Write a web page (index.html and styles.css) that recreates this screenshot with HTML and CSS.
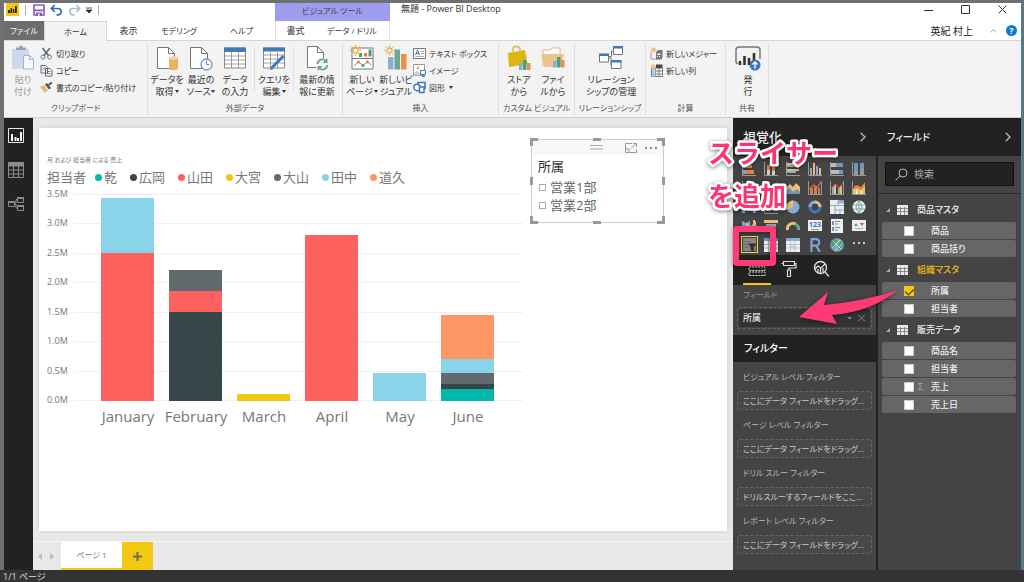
FILE: index.html
```html
<!DOCTYPE html>
<html lang="ja">
<head>
    <meta charset="UTF-8">
    <meta name="viewport" content="width=device-width, initial-scale=1.0">
    <title>無題 - Power BI Desktop</title>
    <link rel="stylesheet" href="styles.css">
</head>
<body>
    <div class="window">
        <!-- タイトルバー -->
        <header class="titlebar">
            <div class="quick-access">
                <svg class="app-logo" width="13" height="13" viewBox="0 0 13 13"><rect width="13" height="13" fill="#f2c811"/><path d="M2 10V7h2v3zM4.500 10V5h1.500v5zM6.800 10V6h1.500v4zM9 10V3h1.800v7z" fill="#222"/></svg>
                <span class="bar"></span>
                <button class="icon-btn save" aria-label="保存"><svg width="12" height="12" viewBox="0 0 12 12"><path d="M1 1h10v10H1z" fill="#fff" stroke="#8a5ab5" stroke-width="1.600"/><path d="M1 5.500h10v1.800H1zM3 8.500h6V12H3z" fill="#8a5ab5"/><path d="M5 9.500h1.500V12H5z" fill="#fff"/></svg></button>
                <button class="icon-btn" aria-label="元に戻す"><svg width="13" height="12" viewBox="0 0 13 12"><path d="M1.500 4.500H8a3.200 3.200 0 0 1 0 6.400H6.500M4.800 1L1.300 4.500 4.800 8" fill="none" stroke="#2f6eb3" stroke-width="1.700"/></svg></button>
                <button class="icon-btn" aria-label="やり直し"><svg width="13" height="12" viewBox="0 0 13 12"><path d="M11.500 4.500H5a3.200 3.200 0 0 0 0 6.400h1.500M8.200 1l3.500 3.500L8.200 8" fill="none" stroke="#a9bdd3" stroke-width="1.700"/></svg></button>
                <button class="icon-btn" aria-label="カスタマイズ"><svg width="6" height="8" viewBox="0 0 6 8"><path d="M0 2h6M0 4h6L3 7z" stroke="#333" stroke-width=".8" fill="#333"/></svg></button>
                <span class="bar"></span>
            </div>
            <div class="context-title">ビジュアル ツール</div>
            <h1 class="doc-title">無題 - Power BI Desktop</h1>
            <div class="window-buttons">
                <button aria-label="最小化"><svg width="9" height="9" viewBox="0 0 9 9"><path d="M0 5.500h9" stroke="#333"/></svg></button>
                <button aria-label="最大化"><svg width="9" height="9" viewBox="0 0 9 9"><path d="M.5.5h8v8h-8z" fill="none" stroke="#333"/></svg></button>
                <button aria-label="閉じる"><svg width="9" height="9" viewBox="0 0 9 9"><path d="M.5.5l8 8M8.500.5l-8 8" stroke="#333"/></svg></button>
            </div>
        </header>

        <!-- リボンタブ -->
        <nav class="tabs">
            <button class="tab tab-file">ファイル</button>
            <button class="tab tab-home">ホーム</button>
            <button class="tab tab-view">表示</button>
            <button class="tab tab-model">モデリング</button>
            <button class="tab tab-help">ヘルプ</button>
            <div class="context-tabs">
                <button class="tab tab-format">書式</button>
                <button class="tab tab-drill">データ / ドリル</button>
            </div>
            <div class="account">
                <span>英紀 村上</span>
                <svg width="7" height="4" viewBox="0 0 7 4"><path d="M.5 3.500l3-3 3 3" fill="none" stroke="#aaa"/></svg>
                <button class="help" aria-label="ヘルプを開く">?</button>
            </div>
        </nav>

        <!-- リボン -->
        <section class="ribbon">
            <div class="group group-clip">
                <div class="tools">
                    <button class="big disabled">
                        <svg width="24" height="26" viewBox="0 0 24 26"><path d="M1 4h17v20H1z" fill="#cdd9ea"/><path d="M5 5V2.500h3a2 2 0 0 1 4 0h3V5z" fill="#8da3c2"/><path d="M12.500 10.500h6l4 4v9.500h-10z" fill="#f5f8fc" stroke="#9cb2d4"/><path d="M18.500 10.500v4h4" fill="none" stroke="#9cb2d4"/></svg>
                        <span>貼り<br>付け</span>
                    </button>
                    <div class="small-list">
                        <button class="small"><svg width="13" height="13" viewBox="0 0 13 13"><path d="M2.500 1l6.500 8M10 1L3.500 9" stroke="#666" stroke-width="1.500"/><circle cx="3" cy="10" r="2" fill="none" stroke="#5683b5"/><circle cx="9.500" cy="10" r="2" fill="none" stroke="#5683b5"/></svg>切り取り</button>
                        <button class="small"><svg width="13" height="13" viewBox="0 0 13 13"><path d="M1 1.500h4.500l2 2V9H1zM5.500 4.500H10l2 2V12H5.500z" fill="#fff" stroke="#666"/><path d="M2.500 4h3M2.500 6h2M7 7.500h3.500M7 9.500h3.500" stroke="#5683b5"/></svg>コピー</button>
                        <button class="small"><svg width="13" height="13" viewBox="0 0 13 13"><path d="M0 6l4-2 4 5-3 3z" fill="#e6b877"/><path d="M5 3.500l2-1.500 4 5-2 1.500z" fill="#555"/><path d="M8.500 4L12 1.500" stroke="#555" stroke-width="2"/></svg>書式のコピー/貼り付け</button>
                    </div>
                </div>
                <div class="group-name">クリップボード</div>
            </div>
            <div class="group group-data">
                <div class="tools">
                    <button class="big">
                        <svg width="24" height="26" viewBox="0 0 24 26"><path d="M2.500 2.500h11l6 6v15h-17z" fill="#fff" stroke="#777"/><path d="M13.500 2.500v6h6" fill="none" stroke="#777"/><path d="M14 13v10c0 3 9 3 9 0V13z" fill="#e6b45c"/><ellipse cx="18.500" cy="13" rx="4.500" ry="1.800" fill="#f3d59c"/></svg>
                        <span>データを<br>取得<i class="caret"></i></span>
                    </button>
                    <button class="big">
                        <svg width="24" height="26" viewBox="0 0 24 26"><path d="M1.500 2.500h11l6 6v15h-17z" fill="#fff" stroke="#777"/><path d="M12.500 2.500v6h6" fill="none" stroke="#777"/><circle cx="17.500" cy="19.500" r="5.500" fill="#fff" stroke="#6e93bd" stroke-width="1.300"/><path d="M17.500 15.500v4h3" fill="none" stroke="#6e93bd"/></svg>
                        <span>最近の<br>ソース<i class="caret"></i></span>
                    </button>
                    <button class="big">
                        <svg width="24" height="26" viewBox="0 0 24 26"><path d="M1.500 3h21v20h-21z" fill="#fff" stroke="#888"/><path d="M1 2.500h22v4.500H1z" fill="#4079b5"/><path d="M1 11h22M1 15h22M1 19h22M8.500 7v16M15.500 7v16" stroke="#888" stroke-width=".8"/></svg>
                        <span>データ<br>の入力</span>
                    </button>
                    <span class="divider"></span>
                    <button class="big">
                        <svg width="24" height="26" viewBox="0 0 24 26"><path d="M1.500 3h21v20h-21z" fill="#fff" stroke="#888"/><path d="M1 2.500h22v4H1z" fill="#4079b5"/><path d="M1 10h22M1 14h22M1 18h22M8.500 7v16M15.500 7v16" stroke="#888" stroke-width=".8"/><path d="M10 22.500L21.500 11" stroke="#3b78bb" stroke-width="3"/><path d="M8 25l1-3.500 2.500 2.500z" fill="#3b78bb"/></svg>
                        <span>クエリを<br>編集<i class="caret"></i></span>
                    </button>
                    <span class="divider"></span>
                    <button class="big wide">
                        <svg width="24" height="26" viewBox="0 0 24 26"><path d="M2.500 1.500h10l6 6v15h-16z" fill="#fff" stroke="#777"/><path d="M12.500 1.500v6h6" fill="none" stroke="#777"/><path d="M11 13h12v12H11z" fill="#f3f3f3"/><path d="M12.500 19a5 5 0 0 1 9-2.500M22.500 20a5 5 0 0 1-9 2.500" fill="none" stroke="#6fa888" stroke-width="1.800"/><path d="M22.500 13v5h-5zM12.500 26v-5h5z" fill="#6fa888"/></svg>
                        <span>最新の情<br>報に更新</span>
                    </button>
                </div>
                <div class="group-name">外部データ</div>
            </div>
            <div class="group group-insert">
                <div class="tools">
                    <button class="big">
                        <svg width="24" height="26" viewBox="0 0 24 26"><path d="M2 3h21v21H2zM2 13.500h21" fill="#fff" stroke="#777"/><path d="M9 8h3v4H9z" fill="#4f9d80"/><path d="M14 8h3v3.500h-3z" fill="#e5823a"/><path d="M18.500 4.500h3v7h-3z" fill="#4f9d80"/><path d="M4 21l4.500-4 4.500 3.500 4.500-4L21 20" fill="none" stroke="#4f9d80"/><circle cx="8.500" cy="17" r="1.600" fill="#e5823a"/><circle cx="13" cy="20.500" r="1.600" fill="#4f9d80"/><circle cx="17.500" cy="17" r="1.600" fill="#e5823a"/><circle cx="5.500" cy="5.500" r="2.500" fill="#fff" stroke="#e6b45c" stroke-width="1.500"/><path d="M5.500 0v2M5.500 9v2M0 5.500h2M9 5.500h2M1.500 1.500l1.500 1.500M8 8l1.500 1.500M9.500 1.500L8 3M3 8L1.500 9.500" stroke="#e6b45c" stroke-width="1.300"/></svg>
                        <span>新しい<br>ページ<i class="caret"></i></span>
                    </button>
                    <button class="big">
                        <svg width="24" height="26" viewBox="0 0 24 26"><path d="M4 12h5.500v12.500H4z" fill="#8badd3"/><path d="M10.500 4.500H16v20h-5.500z" fill="#6fa593"/><path d="M17 9h5.500v15.500H17z" fill="#ed8d46"/><circle cx="5.500" cy="5.500" r="2.500" fill="none" stroke="#e6b45c" stroke-width="1.300"/><path d="M5.500 0v2M5.500 9v2M0 5.500h2M9 5.500h2M1.500 1.500l1.500 1.500M8 8l1.500 1.500M9.500 1.500L8 3M3 8L1.500 9.500" stroke="#e6b45c"/></svg>
                        <span>新しいビ<br>ジュアル</span>
                    </button>
                    <div class="small-list">
                        <button class="small"><svg width="13" height="13" viewBox="0 0 13 13"><path d="M.5 1.500h12v10H.5z" fill="#fff" stroke="#777"/><path d="M2.500 8l2-5 2 5M3 6.500h3" fill="none" stroke="#3b78bb"/><path d="M8 4.500h3M8 6.500h3M2.500 9.500h8.500" stroke="#999" stroke-width=".8"/></svg>テキスト ボックス</button>
                        <button class="small"><svg width="13" height="13" viewBox="0 0 13 13"><path d="M.5.5h11v11H.5z" fill="#fff" stroke="#999"/><circle cx="5" cy="4" r="1.500" fill="#e6b45c"/><path d="M1 9.500l3-3 3 3v2H1z" fill="#bcd0e6"/><path d="M7.500 6.500h5v4h-5zM9 12.500h3" fill="#fff" stroke="#3b78bb"/></svg>イメージ</button>
                        <button class="small"><svg width="13" height="13" viewBox="0 0 13 13"><path d="M5 1.500h7v6H5z" fill="#fff" stroke="#3b78bb" stroke-width="1.600"/><circle cx="4" cy="6.500" r="3.200" fill="#fff" stroke="#3b78bb" stroke-width="1.400"/><path d="M6.500 6h4.500v5.500H6.500z" fill="#fff" stroke="#3b78bb" stroke-width="1.400"/></svg>図形<i class="caret"></i></button>
                    </div>
                </div>
                <div class="group-name">挿入</div>
            </div>
            <div class="group group-custom">
                <div class="tools">
                    <button class="big">
                        <svg width="24" height="26" viewBox="0 0 24 26"><path d="M6 7V4c0-3 6-4 7 0v3" fill="none" stroke="#dcc05c" stroke-width="1.600"/><path d="M1 8l17-3 2.500 14L2 22z" fill="#dcb70f"/><path d="M12 18h3.500v7H12z" fill="#8badd3"/><path d="M16 15h3.500v10H16z" fill="#4f9d80"/><path d="M20 18h3.500v7H20z" fill="#ed8d46"/></svg>
                        <span>ストア<br>から</span>
                    </button>
                    <button class="big">
                        <svg width="24" height="26" viewBox="0 0 24 26"><path d="M2 21V5h7l2-2h8v6" fill="#fff" stroke="#e6b877"/><path d="M0 9h23l-3.500 13H3z" fill="#ebc48b"/><path d="M12 16h3.500v6.500H12z" fill="#8badd3"/><path d="M16 12h3.500v10.500H16z" fill="#4f9d80"/><path d="M20 15h3.500v7.500H20z" fill="#ed8d46"/></svg>
                        <span>ファイ<br>ルから</span>
                    </button>
                </div>
                <div class="group-name">カスタム ビジュアル</div>
            </div>
            <div class="group group-rel">
                <div class="tools">
                    <button class="big full">
                        <svg width="24" height="26" viewBox="0 0 24 26"><path d="M10 11.500h2.500V6H15M10 13h2v7h1" fill="none" stroke="#777"/><path d="M14.500 2h9v7.500h-9zM.5 9.500h9V17h-9zM12.500 16h9.500v7.500h-9.500z" fill="#fff" stroke="#777"/><path d="M14 1h10v2.500H14zM0 8.500h10V11H0zM12 15h10.500v2.500H12z" fill="#4079b5"/></svg>
                        <span>リレーション<br>シップの管理</span>
                    </button>
                </div>
                <div class="group-name">リレーションシップ</div>
            </div>
            <div class="group group-calc">
                <div class="tools">
                    <div class="small-list">
                        <button class="small"><svg width="13" height="13" viewBox="0 0 13 13"><path d="M1 5v7h6" fill="none" stroke="#999"/><path d="M6 5l2-2h4.500v8L11 12.500H6z" fill="#777"/><path d="M7 6.500h3.500v1.500H7zM7 9h1v1H7zM9 9h1v1H9z" fill="#eee"/><circle cx="3.500" cy="3" r="2.500" fill="#edc58b"/></svg>新しいメジャー</button>
                        <button class="small"><svg width="13" height="13" viewBox="0 0 13 13"><path d="M1.500 4h11v8.500h-11z" fill="#fff" stroke="#777"/><path d="M6 .5h6.500V4H6z" fill="#444"/><path d="M1 7h12M1 10h12M5.500 4v8M9 4v8" stroke="#777"/><path d="M2 4.500h3.500v8H2z" fill="#b9cbe0"/><circle cx="3" cy="2.500" r="2.200" fill="#edc58b"/></svg>新しい列</button>
                    </div>
                </div>
                <div class="group-name">計算</div>
            </div>
            <div class="group group-share">
                <div class="tools">
                    <button class="big full">
                        <svg width="26" height="26" viewBox="0 0 26 26"><path d="M3 18.500a2 2 0 0 1-2-2V5a3 3 0 0 1 3-3h18a3 3 0 0 1 3 3v9" fill="none" stroke="#777" stroke-width="1.500"/><path d="M5 16v4M9.500 11v9M14 13v7M19 8v9" stroke="#333" stroke-width="2.600"/><circle cx="20" cy="20" r="5.500" fill="#3b78bb"/><path d="M20 23.500v-6M17.500 19.500l2.500-2.500 2.500 2.500" fill="none" stroke="#fff" stroke-width="1.400"/></svg>
                        <span>発<br>行</span>
                    </button>
                </div>
                <div class="group-name">共有</div>
            </div>
        </section>

        <main class="workspace">
            <nav class="side-nav">
                <button aria-label="レポート"><svg width="16" height="16" viewBox="0 0 16 16"><path d="M.5.5h15v14H.5z" fill="none" stroke="#e8e8e8"/><path d="M4 13V6M7.500 13V9M10 13v-3M13 13V4" stroke="#fff" stroke-width="2"/></svg></button>
                <button aria-label="データ"><svg width="16" height="16" viewBox="0 0 16 16"><path d="M.5.5h15v15H.5zM.5 8h15M.5 12h15M5.500 4v12M10.500 4v12" fill="none" stroke="#8a8a8a"/><path d="M0 0h16v4.500H0z" fill="#8a8a8a"/></svg></button>
                <button aria-label="リレーションシップ"><svg width="16" height="16" viewBox="0 0 16 16"><path d="M6 7h2V3.500h2M6 8h2v4h2" fill="none" stroke="#8a8a8a"/><path d="M.5 5.500h6v5h-6zM9.500 1.500h6v5h-6zM9.500 9.500h6v5h-6z" fill="#222" stroke="#8a8a8a"/><path d="M0 5h7v2H0zM9 1h7v2H9zM9 9h7v2H9z" fill="#8a8a8a"/></svg></button>
            </nav>

            <section class="report">
                <div class="page">
                    <div class="chart">
                        <h2 class="chart-title">月 および 担当者 による 売上</h2>
                        <ul class="legend">
                            <li class="legend-name">担当者</li>
                            <li><i class="dot teal"></i>乾</li>
                            <li><i class="dot dark"></i>広岡</li>
                            <li><i class="dot red"></i>山田</li>
                            <li><i class="dot yellow"></i>大宮</li>
                            <li><i class="dot gray"></i>大山</li>
                            <li><i class="dot blue"></i>田中</li>
                            <li><i class="dot orange"></i>道久</li>
                        </ul>
                        <div class="plot-area">
                            <div class="y-axis">
                                <span>3.5M</span><span>3.0M</span><span>2.5M</span><span>2.0M</span><span>1.5M</span><span>1.0M</span><span>0.5M</span><span>0.0M</span>
                            </div>
                            <div class="plot">
                                <div class="column"><div class="blue" style="height: 26.500%"></div><div class="red" style="height: 71.500%"></div></div>
                                <div class="column"><div class="gray" style="height: 10%"></div><div class="red" style="height: 10.200%"></div><div class="dark" style="height: 43%"></div></div>
                                <div class="column"><div class="yellow" style="height: 3.300%"></div></div>
                                <div class="column"><div class="red" style="height: 80%"></div></div>
                                <div class="column"><div class="blue" style="height: 13.400%"></div></div>
                                <div class="column"><div class="orange" style="height: 21.300%"></div><div class="blue" style="height: 7.200%"></div><div class="gray" style="height: 5.300%"></div><div class="dark" style="height: 2.200%"></div><div class="teal" style="height: 5.800%"></div></div>
                            </div>
                        </div>
                        <div class="x-axis">
                            <span>January</span><span>February</span><span>March</span><span>April</span><span>May</span><span>June</span>
                        </div>
                    </div>

                    <div class="slicer">
                        <div class="slicer-bar">
                            <svg width="13" height="5" viewBox="0 0 13 5"><path d="M0 .5h13M0 4h13" stroke="#aaa"/></svg>
                            <div class="slicer-actions">
                                <svg width="12" height="10" viewBox="0 0 12 10"><path d="M7 .5H.5v9h11V6M.5 6H4v3.500M6 5.500l5-5M8 .5h3.500V4" fill="none" stroke="#999"/></svg>
                                <svg width="12" height="2" viewBox="0 0 12 2"><path d="M0 0h2v2H0zM5 0h2v2H5zM10 0h2v2h-2z" fill="#888"/></svg>
                            </div>
                        </div>
                        <h3>所属</h3>
                        <label><input type="checkbox">営業1部</label>
                        <label><input type="checkbox">営業2部</label>
                        <i class="handle nw"></i><i class="handle n"></i><i class="handle ne"></i>
                        <i class="handle w"></i><i class="handle e"></i>
                        <i class="handle sw"></i><i class="handle s"></i><i class="handle se"></i>
                    </div>
                </div>
                <div class="page-tabs">
                    <button class="page-arrow" aria-label="前へ"><svg width="4" height="7" viewBox="0 0 4 7"><path d="M4 0v7L0 3.500z" fill="#bbb"/></svg></button>
                    <button class="page-arrow" aria-label="次へ"><svg width="4" height="7" viewBox="0 0 4 7"><path d="M0 0v7l4-3.500z" fill="#bbb"/></svg></button>
                    <button class="page-tab">ページ 1</button>
                    <button class="page-add" aria-label="ページの追加"><svg width="9" height="9" viewBox="0 0 9 9"><path d="M4.500 0v9M0 4.500h9" stroke="#6d6a5c" stroke-width="2"/></svg></button>
                </div>
            </section>

            <!-- 視覚化ペイン -->
            <aside class="pane viz-pane">
                <div class="pane-head"><h2>視覚化</h2><svg width="6" height="10" viewBox="0 0 6 10"><path d="M.7.700L5 5 .7 9.300" fill="none" stroke="#bbb" stroke-width="1.300"/></svg></div>
                <div class="viz-grid">
                    <svg viewBox="0 0 14 14"><path d="M.5 0v13.500H14" fill="none" stroke="#999"/><path d="M1 3h5v3H1zM1 8h3v4H1z" fill="#8aabd0"/><path d="M6 3h4v3H6zM4 8h8v4H4z" fill="#e5823a"/></svg>
                    <svg viewBox="0 0 14 14"><path d="M.5 0v13.500H14" fill="none" stroke="#999"/><path d="M3 8h3v5H3zM8 9h3v4H8z" fill="#ccc"/><path d="M3 3h3v5H3zM8 5h3v4H8z" fill="#e5823a"/></svg>
                    <svg viewBox="0 0 14 14"><path d="M.5 0v13.500H14" fill="none" stroke="#999"/><path d="M1 1h8v2H1zM1 7h12v2H1z" fill="#e8be72"/><path d="M1 3h10v2H1zM1 9h9v2H1z" fill="#8aabd0"/></svg>
                    <svg viewBox="0 0 14 14"><path d="M.5 0v13.500H14" fill="none" stroke="#999"/><path d="M2 6h2v7H2zM8 4h2v9H8z" fill="#8aabd0"/><path d="M5 1h2v12H5zM11 6h2v7h-2z" fill="#e8be72"/></svg>
                    <svg viewBox="0 0 14 14"><path d="M.5 0v13.500H14" fill="none" stroke="#999"/><path d="M1 1h5v4H1zM1 8h8v4H1z" fill="#bbb"/><path d="M6 1h7v4H6zM9 8h4v4H9z" fill="#6f93c4"/></svg>
                    <svg viewBox="0 0 14 14"><path d="M.5 0v13.500H14" fill="none" stroke="#999"/><path d="M2 1h4v8H2zM8 1h4v5H8z" fill="#6f93c4"/><path d="M2 9h4v4H2zM8 6h4v7H8z" fill="#999"/></svg>

                    <svg viewBox="0 0 14 14"><path d="M.5 0v13.500H14" fill="none" stroke="#999"/><path d="M1 10l4-5 3 3 5-6" fill="none" stroke="#8aabd0" stroke-width="1.500"/></svg>
                    <svg viewBox="0 0 14 14"><path d="M.5 0v13.500H14" fill="none" stroke="#999"/><path d="M1 13V8l4-4 3 3 5-6v12z" fill="#e5823a"/></svg>
                    <svg viewBox="0 0 14 14"><path d="M0 7l4-4 3 3 3-4 4 4v5H0z" fill="#e8be72"/><path d="M0 9l4-2 3 4 4-3 3 3v2H0z" fill="#6f93c4"/></svg>
                    <svg viewBox="0 0 14 14"><path d="M.5 0v13.500h13V0" fill="none" stroke="#999"/><path d="M2 7h3v6H2zM6 5h3v8H6zM10 7h2v6h-2z" fill="#c7805a"/><path d="M1 8l5-4 3 3 4-6" fill="none" stroke="#e5603a" stroke-width="1.400"/></svg>
                    <svg viewBox="0 0 14 14"><path d="M.5 0v13.500h13V0" fill="none" stroke="#999"/><path d="M2 6h2v7H2zM8 7h2v6H8z" fill="#8aabd0"/><path d="M4 4h2v9H4zM10 5h2v8h-2z" fill="#e8be72"/><path d="M1 7l5-4 3 4 4-5" fill="none" stroke="#e5603a"/></svg>
                    <svg viewBox="0 0 14 14"><path d="M.5 0v13.500H14" fill="none" stroke="#999"/><path d="M1 8l4-2 4 2 4-5v10H1z" fill="#e8be72"/><path d="M2 5l3-1 4 2 4-5v4l-4 4-4-2-3 1z" fill="#e5823a"/><path d="M4 9h1v4H4zM9 10h1v3H9z" fill="#fff"/></svg>

                    <svg viewBox="0 0 14 14"><path d="M0 3h3v10H0zM4 5h3v5H4zM8 3h2v6H8zM11 1h3v12h-3z" fill="#8aabd0"/></svg>
                    <svg viewBox="0 0 14 14"><path d="M.5 0v13.500H14" fill="none" stroke="#999"/><circle cx="4" cy="9" r="1.500" fill="#e8be72"/><circle cx="9" cy="5" r="2" fill="#8aabd0"/></svg>
                    <svg viewBox="0 0 14 14"><circle cx="7" cy="7" r="6.500" fill="#8aabd0"/><path d="M7 7V.5A6.500 6.500 0 0 0 1.500 10z" fill="#e8be72"/></svg>
                    <svg viewBox="0 0 14 14"><circle cx="7" cy="7" r="5" fill="none" stroke="#3f78b9" stroke-width="3"/><path d="M7 2a5 5 0 0 1 5 5" fill="none" stroke="#e8be72" stroke-width="3"/><path d="M2 7a5 5 0 0 1 5-5" fill="none" stroke="#8aabd0" stroke-width="3"/></svg>
                    <svg viewBox="0 0 14 14"><path d="M0 0h14v14H0z" fill="#eee"/><path d="M0 5.500h14M8 0v5.500M5 5.500V14M5 10h9M10 10v4M8 3h6" stroke="#8aabd0"/><path d="M8.500 0H14v2.500H8.500z" fill="#8aabd0"/></svg>
                    <svg viewBox="0 0 14 14"><circle cx="7" cy="7" r="6.500" fill="#f2f6f7"/><path d="M1 5h12M1 9h12M7 1v12M7 1Q1 7 7 13M7 1q6 6 0 12" stroke="#5aa08c" stroke-width=".8" fill="none"/></svg>

                    <svg viewBox="0 0 14 14"><path d="M0 2l4 2 4-2v9l-4 2-4-2z" fill="#8aabd0"/><path d="M4 4l5 3 5-5v10H4z" fill="#ccc"/><path d="M11 1h2v7h-2z" fill="#e8be72"/></svg>
                    <svg viewBox="0 0 14 14"><path d="M0 1h14v3H0z" fill="#e8be72"/><path d="M2 5h10v3H2z" fill="#8aabd0"/><path d="M4 9h6v3H4z" fill="#eee"/></svg>
                    <svg viewBox="0 0 14 14"><path d="M1.500 11a5.500 5.500 0 0 1 8-6" fill="none" stroke="#e8be72" stroke-width="3"/><path d="M9.500 5a5.500 5.500 0 0 1 3 6" fill="none" stroke="#6fa593" stroke-width="3"/></svg>
                    <svg viewBox="0 0 14 14"><path d="M0 1h14v11H0z" fill="#eee"/><text x="1" y="8" class="num-icon">123</text><path d="M3 10.500h8" stroke="#999"/></svg>
                    <svg viewBox="0 0 14 14"><path d="M1 0h12v14H1z" fill="#eee"/><path d="M3 2v4M3 8v4" stroke="#3f78b9" stroke-width="1.500"/><path d="M5 2.500h5M5 5h3M5 8.500h5M5 11h3" stroke="#888"/></svg>
                    <svg viewBox="0 0 14 14"><path d="M0 1h14v11H0z" fill="#eee"/><path d="M2 7l2-3 2 3z" fill="#4f9d80"/><path d="M8 4h4l-2 3z" fill="#d64f4f"/><path d="M3 9.500h8" stroke="#aaa"/></svg>

                    <svg class="selected" viewBox="0 0 14 14"><path d="M1 1h12v12H1z" fill="#888"/><path d="M2 4.500h6M2 7h4M2 9.500h4" stroke="#666"/><path d="M5.500 6H14l-3 3.500V14l-3-2V9.500z" fill="#333"/></svg>
                    <svg viewBox="0 0 14 14"><path d="M0 0h14v14H0z" fill="#eee"/><path d="M0 0h14v3H0z" fill="#6f93c4"/><path d="M0 6.500h14M0 10h14M4.500 3v11M9 3v11" stroke="#aaa"/></svg>
                    <svg viewBox="0 0 14 14"><path d="M0 0h14v14H0z" fill="#eee"/><path d="M0 0h14v3H0z" fill="#8aabd0"/><path d="M4.500 6.500h5v3.500h-5z" fill="#c3d4e8"/><path d="M0 6.500h14M0 10h14M4.500 3v11M9 3v11" stroke="#aebfd2" stroke-width=".8"/></svg>
                    <svg viewBox="0 0 14 14"><path d="M3.500 14V1.200H8a3 3 0 0 1 0 6.500H3.500M8 7.500l4 6.500" fill="none" stroke="#7fa3d4" stroke-width="2.200"/></svg>
                    <svg viewBox="0 0 14 14"><circle cx="7" cy="7" r="6.800" fill="#79aacb"/><path d="M2 3l4-2 2 3-3 3-2 4-2-3zM9 5l3-2 1 4-3 5-3-2z" fill="#4f9d6b"/><path d="M2 10L10 2M5 13L13 5M3 3l8 8" stroke="#dfeeee" stroke-width=".7"/></svg>
                    <svg viewBox="0 0 14 14"><path d="M1 4h2v2H1zM6 4h2v2H6zM11 4h2v2h-2z" fill="#ccc"/></svg>
                </div>
                <div class="viz-tabs">
                    <button class="active" aria-label="フィールド"><svg width="18" height="16" viewBox="0 0 18 16"><path d="M1 1.500h16v3.500H1zM1 6h16v3.500H1zM1 11h16v3.500H1z" fill="none" stroke="#ddd" stroke-dasharray="2 1"/></svg></button>
                    <button aria-label="書式"><svg width="16" height="18" viewBox="0 0 16 18"><path d="M2.500 1.500h11v4h-11zM13.500 3.500H15V8H8v2M2.500 3.500H.5" fill="none" stroke="#ddd" stroke-width="1.200"/><path d="M6.500 10h3v6.500h-3z" fill="none" stroke="#ddd" stroke-width="1.200"/></svg></button>
                    <button aria-label="分析"><svg width="17" height="18" viewBox="0 0 17 18"><circle cx="7.500" cy="7.500" r="6" fill="none" stroke="#ddd" stroke-width="1.400"/><path d="M12 12l4 4.500M2 9l3-3 3 2 4-4M5 9v4M7.500 8v5M10 8v4" fill="none" stroke="#ddd" stroke-width="1.300"/></svg></button>
                </div>
                <div class="field-well">
                    <h3>フィールド</h3>
                    <div class="drop">
                        <div class="chip">所属<svg width="19" height="8" viewBox="0 0 19 8"><path d="M0 3h5L2.500 5.500z" fill="#888"/><path d="M11 .5l7 7M18 .5l-7 7" stroke="#888"/></svg></div>
                    </div>
                </div>
                <h2 class="filter-head">フィルター</h2>
                <div class="filters">
                    <h3>ビジュアル レベル フィルター</h3>
                    <div class="drop-target">ここにデータ フィールドをドラッグ...</div>
                    <h3>ページ レベル フィルター</h3>
                    <div class="drop-target">ここにデータ フィールドをドラッグ...</div>
                    <h3>ドリル スルー フィルター</h3>
                    <div class="drop-target">ドリルスルーするフィールドをここ...</div>
                    <h3>レポート レベル フィルター</h3>
                    <div class="drop-target">ここにデータ フィールドをドラッグ...</div>
                </div>

                <!-- 説明用の注釈 -->
                <svg class="annotation" width="144" height="210" viewBox="0 0 144 210">
                    <rect x="3" y="111" width="37" height="34" rx="1" fill="none" stroke="#ff3b76" stroke-width="6"/>
                    <path d="M66 199L95 174 91 187Q128 184 165 172 138 194 99 197L104 206z" fill="#ff3b76"/>
                    <text x="-25" y="45">スライサー</text>
                    <text x="-25" y="88">を追加</text>
                </svg>
            </aside>

            <!-- フィールドペイン -->
            <aside class="pane fields-pane">
                <div class="pane-head"><h2>フィールド</h2><svg width="6" height="10" viewBox="0 0 6 10"><path d="M.7.700L5 5 .7 9.300" fill="none" stroke="#bbb" stroke-width="1.300"/></svg></div>
                <div class="search-wrap">
                    <label class="search">
                        <svg width="13" height="13" viewBox="0 0 13 13"><circle cx="8" cy="5" r="4" fill="none" stroke="#bbb"/><path d="M5 8L.5 12.500" stroke="#bbb"/></svg>
                        <input type="text" placeholder="検索" aria-label="検索">
                    </label>
                </div>
                <div class="tables">
                    <h3><i class="fold"></i><svg width="11" height="10" viewBox="0 0 11 10"><path d="M0 0h11v10H0z" fill="#e8e8e8"/><path d="M0 3.500h11M0 6.500h11M3.500 2v8M7.500 2v8" stroke="#777" stroke-width=".8"/></svg>商品マスタ</h3>
                    <label class="field"><input type="checkbox"><i></i>商品</label>
                    <label class="field"><input type="checkbox"><i></i>商品括り</label>
                    <h3 class="used"><i class="fold"></i><svg width="11" height="10" viewBox="0 0 11 10"><path d="M0 0h11v10H0z" fill="#e8e8e8"/><path d="M0 3.500h11M0 6.500h11M3.500 2v8M7.500 2v8" stroke="#777" stroke-width=".8"/></svg>組織マスタ</h3>
                    <label class="field"><input type="checkbox" checked><i></i>所属</label>
                    <label class="field"><input type="checkbox"><i></i>担当者</label>
                    <h3><i class="fold"></i><svg width="11" height="10" viewBox="0 0 11 10"><path d="M0 0h11v10H0z" fill="#e8e8e8"/><path d="M0 3.500h11M0 6.500h11M3.500 2v8M7.500 2v8" stroke="#777" stroke-width=".8"/></svg>販売データ</h3>
                    <label class="field"><input type="checkbox"><i></i>商品名</label>
                    <label class="field"><input type="checkbox"><i></i>担当者</label>
                    <label class="field"><input type="checkbox"><i>Σ</i>売上</label>
                    <label class="field"><input type="checkbox"><i></i>売上日</label>
                </div>
            </aside>
        </main>
    </div>
    <footer class="status">1/1 ページ</footer>
</body>
</html>
```

FILE: styles.css
```css
* {
    box-sizing: border-box;
    margin: 0;
    padding: 0;
}

body {
    display: flex;
    flex-direction: column;
    height: 100vh;
    overflow: hidden;
    background: #707070;
    color: #333;
    font-family: "Open Sans", "Noto Sans CJK JP", sans-serif;
    font-feature-settings: "palt";
    font-size: 9px;
    line-height: 12px;
}

button,
input {
    border: none;
    background: none;
    color: inherit;
    font: inherit;
    font-feature-settings: inherit;
}

svg {
    display: block;
    flex: none;
}

i {
    font-style: normal;
}

ul {
    list-style: none;
}

.window {
    flex: 1;
    min-height: 0;
    display: flex;
    flex-direction: column;
    margin: 3px 2px 0 4px;
    border-right: 1px solid #1c8fb5;
    background: #fff;
}

/* タイトルバー */
.titlebar {
    display: flex;
    height: 18px;
}

.quick-access {
    display: flex;
    align-items: center;
    gap: 5px;
    width: 271px;
    height: 13px;
    padding-left: 2px;
}

.bar {
    width: 1px;
    height: 10px;
    margin-left: 1px;
    background: #aaa;
}

.save {
    margin-left: 2px;
}

.context-title {
    width: 115px;
    background: #9d9cee;
    color: #444;
    font-size: 8px;
    line-height: 15px;
    text-align: center;
}

.doc-title {
    margin-left: 11px;
    font-size: 9px;
    font-weight: normal;
}

.window-buttons {
    display: flex;
    gap: 28px;
    height: 12px;
    margin-left: auto;
    padding-right: 14px;
}

/* リボンタブ */
.tabs {
    display: flex;
    height: 20px;
    border-bottom: 1px solid #d5d5d5;
}

.tab {
    font-size: 8px;
}

.tab-file {
    width: 40px;
    background: #6d6d6d;
    color: #fff;
}

.tab-home {
    width: 63px;
    height: 20px;
    border: 1px solid #d5d5d5;
    border-bottom: none;
    background: #f3f3f3;
}

.tab-view {
    width: 43px;
}

.tab-view,
.tab-format {
    font-size: 9px;
}

.tab-model {
    width: 58px;
}

.tab-help {
    width: 67px;
}

.context-tabs {
    display: flex;
    width: 115px;
    border: 1px solid #e3e3e3;
    border-width: 0 1px;
}

.tab-format {
    width: 39px;
}

.tab-drill {
    flex: 1;
}

.account {
    display: flex;
    align-items: center;
    margin-left: auto;
    padding-right: 4px;
    color: #222;
    font-size: 10px;
}

.account svg {
    margin: 0 9px 0 17px;
}

.help {
    width: 11px;
    height: 11px;
    border-radius: 50%;
    background: #0b78d7;
    color: #fff;
    font-size: 9px;
    font-weight: bold;
    line-height: 11px;
}

/* リボン */
.ribbon {
    display: flex;
    height: 77px;
    padding: 2px 0;
    background: #f3f3f3;
    border-bottom: 1px solid #cfcfcf;
}

.group {
    display: flex;
    flex-direction: column;
    flex: none;
    border-right: 1px solid #dedede;
}

.group-clip {
    width: 144px;
}

.group-data {
    width: 195px;
}

.group-insert {
    width: 156px;
}

.group-custom {
    width: 76px;
}

.group-rel {
    width: 71px;
}

.group-calc {
    width: 80px;
}

.group-share {
    width: 43px;
}

.tools {
    display: flex;
    flex: 1;
    padding: 2px 0 0 2px;
}

.group-custom .tools {
    padding-left: 3px;
}

.group-calc .tools {
    padding-left: 4px;
}

.big {
    display: flex;
    flex-direction: column;
    align-items: center;
    gap: 3px;
    width: 34px;
    height: 54px;
    line-height: 12px;
    white-space: nowrap;
}

.big.wide {
    width: 42px;
}

.big.full {
    flex: 1;
}

.disabled {
    color: #999;
}

.divider {
    width: 1px;
    height: 44px;
    margin: 2px;
    background: #dedede;
}

.caret {
    display: inline-block;
    margin-left: 1px;
    border: 2px solid transparent;
    border-top: 3px solid #333;
    border-bottom: none;
    vertical-align: 2px;
}

.small-list {
    display: flex;
    flex-direction: column;
}

.small {
    display: flex;
    align-items: center;
    gap: 3px;
    height: 17px;
    font-size: 8px;
    white-space: nowrap;
}

.group-name {
    height: 13px;
    color: #555;
    font-size: 8px;
    text-align: center;
    white-space: nowrap;
}

/* 作業領域 */
.workspace {
    display: flex;
    flex: 1;
    min-height: 0;
}

.side-nav {
    display: flex;
    flex-direction: column;
    align-items: center;
    gap: 18px;
    width: 29px;
    padding: 10px 5px 0 0;
    background: #222;
}

.report {
    display: flex;
    flex: 1;
    flex-direction: column;
    background: #e8e8e8;
}

.page {
    display: flex;
    flex: 1;
    align-items: flex-start;
    margin: 10px 6px 10px;
    background: #fff;
    box-shadow: 0 0 4px #ccc;
}

.chart {
    width: 484px;
    padding: 26px 0 0 8px;
    color: #777;
}

.chart-title {
    font-size: 6px;
    font-weight: normal;
    line-height: 12px;
}

.legend {
    display: flex;
    gap: 13px;
    margin-top: 2px;
    font-size: 13px;
    line-height: 18px;
}

.legend li {
    display: flex;
    align-items: center;
    gap: 2px;
}

.legend .legend-name {
    margin-right: -4px;
}

.dot {
    width: 7px;
    height: 7px;
    border-radius: 50%;
}

.teal {
    background: #01b8aa;
}

.dark {
    background: #374649;
}

.red {
    background: #fd625e;
}

.yellow {
    background: #f2c80f;
}

.gray {
    background: #5f6b6d;
}

.blue {
    background: #8ad4eb;
}

.orange {
    background: #fe9666;
}

.plot-area {
    display: flex;
    gap: 5px;
    height: 218px;
    margin-top: 2px;
}

.y-axis {
    display: flex;
    flex-direction: column;
    justify-content: space-between;
    width: 22px;
}

.plot {
    display: flex;
    width: 449px;
    height: 207px;
    margin-top: 6px;
    padding: 0 21px 0 20px;
    background: repeating-linear-gradient(#f0f0f0 0 1px, transparent 1px calc((100% - 1px) / 7));
}

.column {
    display: flex;
    flex: 1;
    flex-direction: column;
    justify-content: flex-end;
    padding: 0 8px 0 7px;
}

.x-axis {
    display: flex;
    padding: 0 21px 0 47px;
    font-size: 15px;
    line-height: 20px;
}

.x-axis span {
    flex: 1;
    width: 0;
    text-align: center;
}

/* スライサー */
.slicer {
    position: relative;
    width: 133px;
    height: 84px;
    margin: 11px 0 0 8px;
    border: 1px solid #ccc;
    color: #666;
    font-size: 13px;
}

.slicer-bar {
    display: flex;
    align-items: center;
    justify-content: flex-end;
    height: 15px;
    background: #f8f8f8;
    gap: 22px;
    padding-right: 6px;
}

.slicer-actions {
    display: flex;
    align-items: center;
    gap: 8px;
}

.slicer h3 {
    padding: 3px 0 3px 6px;
    color: #333;
    font-size: 13px;
    font-weight: normal;
    line-height: 17px;
}

.slicer label {
    display: flex;
    align-items: center;
    gap: 4px;
    height: 18px;
    padding-left: 7px;
}

.slicer input {
    width: 7px;
    height: 7px;
    border: 1px solid #aaa;
    appearance: none;
}

.handle {
    position: absolute;
    width: 8px;
    height: 8px;
    border: 0 solid #999;
}

.nw {
    top: -2px;
    left: -2px;
    border-width: 3px 0 0 3px;
}

.ne {
    top: -2px;
    right: -2px;
    border-width: 3px 3px 0 0;
}

.sw {
    bottom: -2px;
    left: -2px;
    border-width: 0 0 3px 3px;
}

.se {
    right: -2px;
    bottom: -2px;
    border-width: 0 3px 3px 0;
}

.n,
.s {
    left: 61px;
    height: 3px;
    border-width: 3px 0 0 8px;
}

.n {
    top: -2px;
}

.s {
    bottom: -2px;
}

.w,
.e {
    top: 37px;
    width: 3px;
    border-width: 8px 3px 0 0;
}

.w {
    left: -2px;
}

.e {
    right: -2px;
}

/* ページタブ */
.page-tabs {
    display: flex;
    height: 29px;
    border-top: 1px solid #f5f5f5;
}

.page-arrow {
    width: 12px;
    padding-left: 5px;
}

.page-tab {
    width: 61px;
    margin-left: 4px;
    border-bottom: 2px solid #f2c811;
    background: #fff;
    color: #777;
    font-size: 8px;
}

.page-add {
    display: flex;
    align-items: center;
    justify-content: center;
    width: 31px;
    background: #f2c811;
}

/* 右側のペイン */
.pane {
    flex: none;
    width: 144px;
    background: #444;
    color: #ddd;
}

.pane-head {
    display: flex;
    align-items: center;
    justify-content: space-between;
    height: 38px;
    padding: 0 10px;
    background: #222;
}

.pane-head h2 {
    color: #eee;
    font-size: 13px;
    font-weight: 500;
    line-height: 18px;
}

.viz-pane {
    position: relative;
    z-index: 1;
    border-right: 1px solid #222;
}

.viz-grid {
    display: grid;
    grid-template-columns: repeat(6, 22px);
    grid-auto-rows: 19px;
    place-items: center;
    height: 99px;
    padding: 3px 0 0 5px;
}

.viz-grid svg {
    width: 14px;
    height: 14px;
}

.viz-grid .selected {
    width: 17px;
    height: 17px;
    border: 1px solid #f2d53c;
}

.num-icon {
    fill: #3f78b9;
    font-size: 7px;
    font-weight: bold;
}

.viz-tabs {
    display: flex;
    gap: 4px;
    height: 30px;
    padding-left: 10px;
    background: #222;
}

.viz-tabs button {
    display: flex;
    align-items: center;
    justify-content: center;
    width: 28px;
    border-bottom: 2px solid transparent;
}

.viz-tabs .active {
    border-color: #f2c811;
}

.field-well {
    height: 50px;
    padding: 4px 4px 0;
}

.field-well h3,
.filters h3 {
    padding-left: 6px;
    color: #bbb;
    font-size: 8px;
    font-weight: normal;
}

.field-well h3 {
    height: 18px;
    color: #999;
}

.drop {
    padding: 1px;
    border: 1px dashed #666;
    border-radius: 2px;
}

.chip {
    display: flex;
    align-items: center;
    justify-content: space-between;
    height: 18px;
    padding: 0 4px;
    border-radius: 2px;
    background: #333;
    color: #fff;
}

.filter-head {
    height: 27px;
    padding-left: 11px;
    background: #222;
    color: #fff;
    font-size: 10px;
    font-weight: 500;
    line-height: 27px;
}

.filters {
    padding: 3px 4px;
}

.filters h3 {
    height: 26px;
    line-height: 24px;
}

.drop-target {
    height: 19px;
    margin-bottom: 3px;
    padding-left: 5px;
    border: 1px dashed #666;
    border-radius: 3px;
    background: #484848;
    color: #ccc;
    font-size: 8px;
    line-height: 17px;
    white-space: nowrap;
}

.annotation {
    position: absolute;
    top: 0;
    left: 0;
    overflow: visible;
    filter: drop-shadow(0 1px 2px rgba(0, 0, 0, 0.5));
    pointer-events: none;
}

.annotation text {
    fill: #ff3370;
    stroke: #fff;
    stroke-width: 5px;
    stroke-linejoin: round;
    paint-order: stroke;
    font-family: "Noto Sans CJK JP", sans-serif;
    font-feature-settings: normal;
    font-size: 26px;
    font-weight: bold;
}

/* フィールド一覧 */
.fields-pane {
    border-left: 1px solid #222;
}

.fields-pane .pane-head {
    padding-left: 9px;
}

.fields-pane .pane-head h2 {
    font-size: 10px;
}

.search-wrap {
    padding: 6px 7px 7px;
    border-bottom: 1px solid #2c2c2c;
}

.search {
    display: flex;
    align-items: center;
    gap: 6px;
    height: 24px;
    padding: 0 9px;
    border: 1px solid #111;
    background: #222;
    font-size: 10px;
}

.search input {
    width: 90px;
}

.search input::placeholder {
    color: #aaa;
}

.tables {
    padding: 4px 5px 0 4px;
    color: #eee;
}

.tables h3 {
    display: flex;
    align-items: center;
    height: 24px;
    padding-left: 4px;
    font-size: 9px;
    font-weight: 500;
}

.tables h3 svg {
    margin: 0 9px 0 7px;
}

.tables .used {
    color: #e8b71a;
}

.fold {
    border: 2px solid #aaa;
    border-top-color: transparent;
    border-left-color: transparent;
}

.field {
    display: flex;
    align-items: center;
    height: 17px;
    margin-bottom: 1px;
    padding-left: 22px;
    border-radius: 2px;
    background: #666;
    font-size: 9px;
    font-weight: 500;
}

.field i {
    width: 17px;
    padding-left: 4px;
    color: #aaa;
}

.field input {
    display: flex;
    justify-content: center;
    width: 10px;
    height: 10px;
    background: #fff;
    border: 1px solid #ccc;
    appearance: none;
}

.field input:checked {
    border-color: #f2c811;
    background: #f2c811;
}

.field input:checked::after {
    width: 4px;
    height: 7px;
    border: 1px solid #222;
    border-width: 0 1px 1px 0;
    content: "";
    transform: rotate(45deg);
}

.status {
    flex: none;
    height: 12px;
    padding: 1px 3px;
    background: #333;
    color: #ddd;
    line-height: 12px;
}
```
